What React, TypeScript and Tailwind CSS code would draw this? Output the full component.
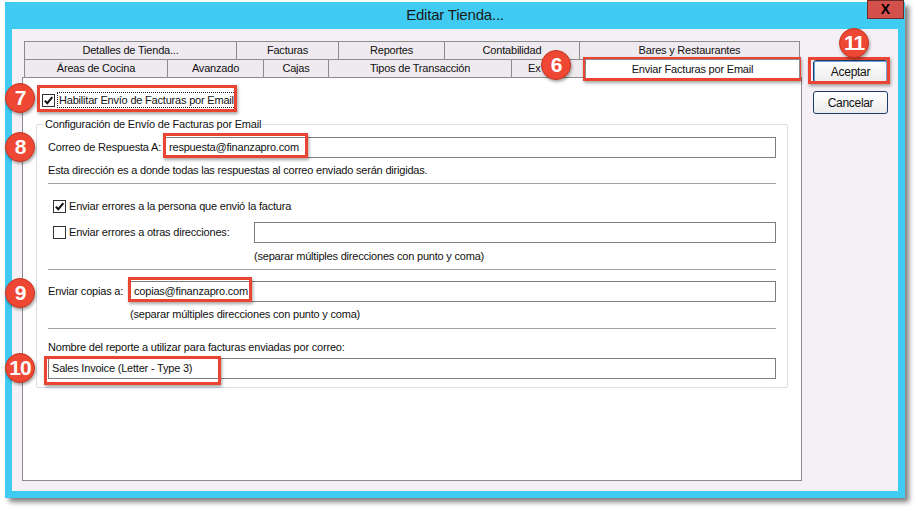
import React from 'react';

const row1 = [
  { label: 'Detalles de Tienda...', w: 'w-[212px]' },
  { label: 'Facturas', w: 'w-[102px]' },
  { label: 'Reportes', w: 'w-[106px]' },
  { label: 'Contabilidad', w: 'w-[135px]' },
  { label: 'Bares y Restaurantes', w: 'w-[221px]' },
];

const row2 = [
  { label: 'Áreas de Cocina', w: 'w-[143px]' },
  { label: 'Avanzado', w: 'w-[96px]' },
  { label: 'Cajas', w: 'w-[65px]' },
  { label: 'Tipos de Transacción', w: 'w-[183px]' },
];

function CheckBox({ checked }: { checked?: boolean }) {
  return (
    <span className="w-[13px] h-[13px] shrink-0 border border-[#333] bg-white flex items-center justify-center">
      {checked && (
        <svg width="11" height="11" viewBox="0 0 11 11">
          <path d="M1.8 5.6 L4.3 8.2 L9.3 2.2" fill="none" stroke="#111" strokeWidth="2" />
        </svg>
      )}
    </span>
  );
}

function TextBox({ value }: { value?: string }) {
  return (
    <div className="flex-1 h-[21px] border border-[#7d7d7d] bg-white flex items-center px-[3px] whitespace-nowrap">
      {value}
    </div>
  );
}

function Badge({ n, pos }: { n: string; pos: string }) {
  return (
    <div
      className={`absolute ${pos} w-[30px] h-[30px] rounded-full bg-[#ee4733] border border-[#c9341f] shadow-[1px_2px_3px_rgba(0,0,0,0.35)] flex items-center justify-center text-white font-bold text-[21px] tracking-[-1px]`}
    >
      {n}
    </div>
  );
}

function RedBox({ pos }: { pos: string }) {
  return (
    <div
      className={`absolute ${pos} border-[3px] border-[#ec4432] shadow-[1px_2px_3px_rgba(0,0,0,0.35)] pointer-events-none`}
    />
  );
}

export default function App() {
  return (
    <div className="relative w-[918px] h-[511px] bg-white overflow-hidden pt-[2px] pl-[5px] font-['Liberation_Sans',Arial,sans-serif] text-[11px] tracking-[-0.2px] text-[#111]">
      <div className="w-[900px] h-[496px] bg-[#3fcbf2] flex flex-col shadow-[4px_4px_5px_rgba(0,0,0,0.5)]">
        {/* title bar */}
        <div className="relative h-[27px] flex items-center justify-center">
          <span className="text-[15px] tracking-[-0.2px] text-[#1a1a1a]">Editar Tienda...</span>
          <div className="absolute right-[1px] -top-[2px] w-[37px] h-[19px] bg-[#d4504a] border border-[#6e2a26] flex items-center justify-center font-bold text-[14px] tracking-normal text-black">
            X
          </div>
        </div>

        {/* dialog body */}
        <div className="flex-1 mx-[7px] mb-[7px] bg-[#f5f0f5] flex">
          <div className="ml-[10px] mt-[12px] w-[780px] flex flex-col">
            <div className="ml-[2px] w-[776px] flex flex-col">
              <div className="flex h-[18px]">
                {row1.map((t, i) => (
                  <div
                    key={t.label}
                    className={`${t.w} h-[18px] bg-[#efeaef] border-t border-l border-[#8c8c8c] ${i === row1.length - 1 ? 'border-r' : ''} flex items-center justify-center whitespace-nowrap`}
                  >
                    {t.label}
                  </div>
                ))}
              </div>
              <div className="flex h-[18px] items-start">
                {row2.map((t) => (
                  <div
                    key={t.label}
                    className={`${t.w} h-[18px] bg-[#efeaef] border-t border-l border-[#8c8c8c] flex items-center justify-center whitespace-nowrap`}
                  >
                    {t.label}
                  </div>
                ))}
                {/* half of this tab is hidden under badge 6 */}
                <div className="w-[74px] h-[18px] bg-[#efeaef] border-t border-l border-[#8c8c8c] flex items-center pl-[16px] whitespace-nowrap">
                  Ex
                </div>
                <div className="relative z-10 w-[215px] h-[19px] bg-white border-t border-l border-r border-[#8c8c8c] flex justify-center pt-[1px] whitespace-nowrap">
                  Enviar Facturas por Email
                </div>
              </div>
            </div>

            <div className="h-[404px] border border-[#8c8c8c] bg-white flex flex-col">
              <div className="mt-[14px] ml-[19px] h-[16px] flex items-center">
                <CheckBox checked />
                <span className="ml-[2px] h-[16px] border border-dotted border-[#222] px-[1px] flex items-center">
                  Habilitar Envío de Facturas por Email
                </span>
              </div>

              <div className="relative mt-[16px] mx-[13px] border border-[#d5dfe5] rounded-[2px] px-[11px] pb-[8px] flex flex-col">
                <span className="absolute -top-[8px] left-[7px] bg-white px-[1px] leading-[14px]">
                  Configuración de Envío de Facturas por Email
                </span>

                <div className="mt-[12px] h-[21px] flex items-center">
                  <span className="w-[117px] shrink-0">Correo de Respuesta A:</span>
                  <TextBox value="respuesta@finanzapro.com" />
                </div>
                <div className="mt-[5px] h-[14px] leading-[14px]">
                  Esta dirección es a donde todas las respuestas al correo enviado serán dirigidas.
                </div>
                <div className="mt-[6px] h-px bg-[#a3a3a3]" />

                <div className="mt-[15px] h-[14px] flex items-center pl-[5px]">
                  <CheckBox checked />
                  <span className="ml-[3px]">Enviar errores a la persona que envió la factura</span>
                </div>
                <div className="mt-[9px] h-[21px] flex items-center">
                  <div className="w-[206px] shrink-0 flex items-center pl-[5px]">
                    <CheckBox />
                    <span className="ml-[3px]">Enviar errores a otras direcciones:</span>
                  </div>
                  <TextBox />
                </div>
                <div className="mt-[6px] h-[14px] leading-[14px] pl-[206px]">
                  (separar múltiples direcciones con punto y coma)
                </div>
                <div className="mt-[6px] h-px bg-[#a3a3a3]" />

                <div className="mt-[11px] h-[21px] flex items-center">
                  <span className="w-[82px] shrink-0">Enviar copias a:</span>
                  <TextBox value="copias@finanzapro.com" />
                </div>
                <div className="mt-[5px] h-[14px] leading-[14px] pl-[82px]">
                  (separar múltiples direcciones con punto y coma)
                </div>
                <div className="mt-[7px] h-px bg-[#a3a3a3]" />

                <div className="mt-[11px] h-[14px] leading-[14px]">
                  Nombre del reporte a utilizar para facturas enviadas por correo:
                </div>
                <div className="mt-[4px] flex">
                  <TextBox value="Sales Invoice (Letter - Type 3)" />
                </div>
              </div>
            </div>
          </div>

          <div className="ml-[11px] mt-[31px] w-[75px] flex flex-col gap-[8px] text-[12px] tracking-[-0.3px]">
            <button className="h-[23px] rounded-[3px] border border-[#1d3b6a] shadow-[inset_0_0_0_1px_#6fa6d6] bg-gradient-to-b from-white to-[#ececec] flex items-center justify-center">
              Aceptar
            </button>
            <button className="h-[23px] rounded-[3px] border border-[#1d3b6a] bg-gradient-to-b from-white to-[#ececec] flex items-center justify-center">
              Cancelar
            </button>
          </div>
        </div>
      </div>

      {/* annotations */}
      <RedBox pos="left-[583px] top-[57px] w-[218px] h-[24px]" />
      <RedBox pos="left-[37px] top-[85px] w-[200px] h-[27px]" />
      <RedBox pos="left-[163px] top-[133px] w-[145px] h-[25px]" />
      <RedBox pos="left-[128px] top-[277px] w-[124px] h-[25px]" />
      <RedBox pos="left-[44px] top-[356px] w-[177px] h-[29px]" />
      <RedBox pos="left-[808px] top-[57px] w-[82px] h-[27px]" />

      <Badge n="6" pos="left-[541px] top-[50px]" />
      <Badge n="7" pos="left-[5px] top-[83px]" />
      <Badge n="8" pos="left-[5px] top-[132px]" />
      <Badge n="9" pos="left-[5px] top-[278px]" />
      <Badge n="10" pos="left-[5px] top-[353px]" />
      <Badge n="11" pos="left-[839px] top-[28px]" />
    </div>
  );
}
